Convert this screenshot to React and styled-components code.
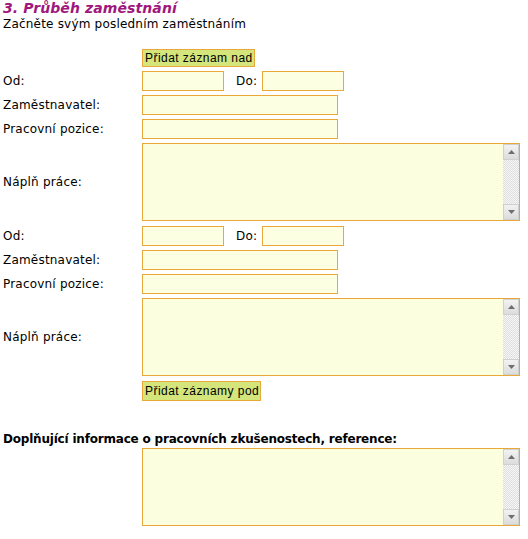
import React from 'react';
import styled, { createGlobalStyle } from 'styled-components';

const Global = createGlobalStyle`
  html, body {
    margin: 0;
    padding: 0;
    background: #ffffff;
  }
  body {
    font-family: "DejaVu Sans", Verdana, sans-serif;
    font-size: 12px;
    color: #000;
  }
`;

const Page = styled.div`
  width: 528px;
  padding: 0 0 0 3px;
  box-sizing: border-box;
`;

const Title = styled.h2`
  margin: 0;
  font-size: 14px;
  line-height: 17px;
  font-weight: bold;
  font-style: italic;
  letter-spacing: 0.1px;
  color: #a0177c;
`;

const Intro = styled.p`
  margin: 0 0 17px;
  font-size: 12px;
  line-height: 15px;
  letter-spacing: 0.2px;
`;

const Row = styled.div`
  display: grid;
  grid-template-columns: 139px 1fr;
  align-items: center;
  margin-bottom: ${({ $gap }) => $gap ?? 4}px;
`;

const Label = styled.label`
  font-size: 12px;
  line-height: 15px;
  letter-spacing: 0.2px;
`;

const Field = styled.div`
  display: flex;
  align-items: center;
`;

const Input = styled.input`
  box-sizing: border-box;
  width: ${({ $w }) => $w}px;
  height: 20px;
  margin: 0;
  padding: 1px 3px;
  border: 1px solid #e8a93a;
  background: #fdffe2;
  font: 12px "DejaVu Sans", Verdana, sans-serif;
  outline: none;
`;

const InlineLabel = styled.span`
  margin: 0 5px 0 12px;
  font-size: 12px;
  line-height: 15px;
  letter-spacing: 0.2px;
`;

const Button = styled.button`
  box-sizing: border-box;
  height: ${({ $h }) => $h}px;
  margin: 0;
  padding: 0 1px 0 2px;
  border: 1px solid #e8a93a;
  background: #d3e57b;
  font: 12px "Liberation Sans", Arial, sans-serif;
  letter-spacing: 0.45px;
  color: #000;
  cursor: pointer;
`;

const AreaBox = styled.div`
  box-sizing: border-box;
  display: flex;
  width: 378px;
  height: ${({ $h }) => $h}px;
  border: 1px solid #e8a93a;
  background: #fbffe0;
`;

const Area = styled.textarea`
  flex: 1;
  margin: 0;
  padding: 2px;
  border: 0;
  background: transparent;
  resize: none;
  outline: none;
  overflow: hidden;
  font: 12px "DejaVu Sans", Verdana, sans-serif;
`;

const Scrollbar = styled.div`
  display: flex;
  flex-direction: column;
  width: 16px;
  background: repeating-conic-gradient(#dedede 0 25%, #f7f7f7 0 50%) 0 0 / 2px 2px;
`;

const ScrollButton = styled.div`
  box-sizing: border-box;
  height: 16px;
  display: flex;
  align-items: center;
  justify-content: center;
  background: linear-gradient(#f2f2f2, #dcdcdc);
  border: 1px solid #d0d0d0;
`;

const Track = styled.div`
  flex: 1;
`;

const Section = styled.h3`
  margin: 31px 0 1px;
  font-size: 12px;
  line-height: 15px;
  font-weight: bold;
  letter-spacing: -0.2px;
`;

const Arrow = ({ down }) => (
  <svg width="7" height="4" viewBox="0 0 7 4">
    <path d={down ? 'M0 0H7L3.5 4Z' : 'M0 4H7L3.5 0Z'} fill="#6e6e6e" />
  </svg>
);

const TextBox = ({ h = 78 }) => (
  <AreaBox $h={h}>
    <Area />
    <Scrollbar>
      <ScrollButton><Arrow /></ScrollButton>
      <Track />
      <ScrollButton><Arrow down /></ScrollButton>
    </Scrollbar>
  </AreaBox>
);

const Record = () => (
  <>
    <Row>
      <Label>Od:</Label>
      <Field>
        <Input $w={82} />
        <InlineLabel>Do:</InlineLabel>
        <Input $w={82} />
      </Field>
    </Row>
    <Row>
      <Label>Zaměstnavatel:</Label>
      <Field><Input $w={196} /></Field>
    </Row>
    <Row>
      <Label>Pracovní pozice:</Label>
      <Field><Input $w={196} /></Field>
    </Row>
    <Row $gap={5}>
      <Label>Náplň práce:</Label>
      <TextBox />
    </Row>
  </>
);

export default function App() {
  return (
    <Page>
      <Global />
      <Title>3. Průběh zaměstnání</Title>
      <Intro>Začněte svým posledním zaměstnáním</Intro>
      <Row>
        <span />
        <Field><Button $h={18}>Přidat záznam nad</Button></Field>
      </Row>
      <Record />
      <Record />
      <Row $gap={0}>
        <span />
        <Field><Button $h={20}>Přidat záznamy pod</Button></Field>
      </Row>
      <Section>Doplňující informace o pracovních zkušenostech, reference:</Section>
      <Row $gap={0}>
        <span />
        <TextBox />
      </Row>
    </Page>
  );
}
